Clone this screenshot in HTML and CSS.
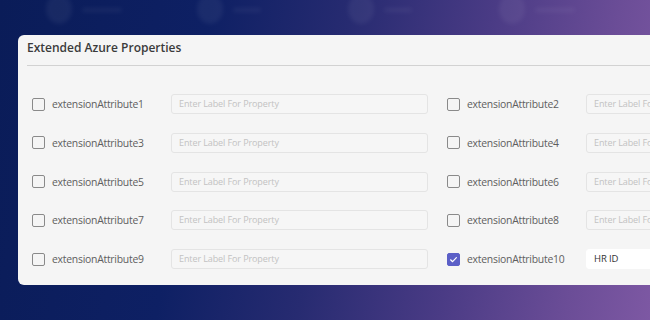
FILE: index.html
```html
<!DOCTYPE html>
<html>
<head>
<meta charset="utf-8">
<link rel="stylesheet" href="styles.css">
</head>
<body>
<div class="page">
  <div class="tiles">
    <div class="tile"><span class="blob"></span><span class="ghost"></span></div>
    <div class="tile"><span class="blob"></span><span class="ghost short"></span></div>
    <div class="tile"><span class="blob"></span><span class="ghost short"></span></div>
    <div class="tile"><span class="blob"></span><span class="ghost"></span></div>
  </div>
  <section class="card">
    <header class="card-head">
      <h2 class="title">Extended Azure Properties</h2>
    </header>
    <div class="grid">
      <div class="field"><span class="box"></span><span class="label">extensionAttribute1</span><div class="input ph">Enter Label For Property</div></div>
      <div class="field"><span class="box"></span><span class="label">extensionAttribute2</span><div class="input ph">Enter Label For Property</div></div>
      <div class="field"><span class="box"></span><span class="label">extensionAttribute3</span><div class="input ph">Enter Label For Property</div></div>
      <div class="field"><span class="box"></span><span class="label">extensionAttribute4</span><div class="input ph">Enter Label For Property</div></div>
      <div class="field"><span class="box"></span><span class="label">extensionAttribute5</span><div class="input ph">Enter Label For Property</div></div>
      <div class="field"><span class="box"></span><span class="label">extensionAttribute6</span><div class="input ph">Enter Label For Property</div></div>
      <div class="field"><span class="box"></span><span class="label">extensionAttribute7</span><div class="input ph">Enter Label For Property</div></div>
      <div class="field"><span class="box"></span><span class="label">extensionAttribute8</span><div class="input ph">Enter Label For Property</div></div>
      <div class="field"><span class="box"></span><span class="label">extensionAttribute9</span><div class="input ph">Enter Label For Property</div></div>
      <div class="field"><span class="box checked"><svg viewBox="0 0 13 13" width="13" height="13"><path d="M3.6 6.8 L5.6 8.7 L9.4 4.6" fill="none" stroke="#fff" stroke-width="1.2" stroke-linecap="round" stroke-linejoin="round"/></svg></span><span class="label">extensionAttribute10</span><div class="input filled">HR ID</div></div>
    </div>
  </section>
</div>
</body>
</html>
```

FILE: styles.css
```css
html, body {
  margin: 0;
  padding: 0;
}
body {
  width: 650px;
  height: 320px;
  overflow: hidden;
  background: linear-gradient(100deg, #0a1c58 0%, #0e2064 30%, #272b71 50%, #4a3b85 70%, #6b4d97 88%, #7d58a3 100%);
  font-family: "Open Sans", "Noto Sans", sans-serif;
}
.page {
  display: flex;
  flex-direction: column;
  padding-left: 18px;
}
.tiles {
  height: 35px;
  display: flex;
  padding-left: 28px;
  opacity: 0.05;
  filter: blur(2px);
}
.tile {
  width: 166px;
  display: flex;
  align-items: flex-start;
  gap: 10px;
}
.blob {
  width: 26px;
  height: 30px;
  border-radius: 50%;
  background: #ffffff;
  margin-top: -6px;
}
.ghost {
  width: 40px;
  height: 4px;
  margin-top: 8px;
  background: #ffffff;
  border-radius: 2px;
}
.ghost.short { width: 28px; }
.card {
  width: 700px;
  height: 250px;
  background: #f5f5f5;
  border-radius: 6px;
  box-sizing: border-box;
}
.card-head {
  margin-left: 9px;
  padding-top: 4px;
  height: 26px;
  border-bottom: 1px solid #d2d2d2;
}
.title {
  margin: 0;
  font-size: 12px;
  line-height: 18px;
  font-weight: 600;
  color: #3b3b3b;
}
.grid {
  display: grid;
  grid-template-columns: 396px 396px;
  column-gap: 19px;
  row-gap: 18.75px;
  padding: 28px 0 0 14px;
}
.field {
  display: flex;
  align-items: center;
  height: 20px;
}
.box {
  width: 13px;
  height: 13px;
  box-sizing: border-box;
  border: 1px solid #8a8a8a;
  border-radius: 2px;
  flex: none;
  margin-right: 7px;
  display: flex;
}
.box.checked {
  background: #5b5fc7;
  border-color: #5b5fc7;
}
.box svg { margin: -1px; }
.label {
  width: 119px;
  flex: none;
  font-size: 10.4px;
  letter-spacing: -0.25px;
  color: #5e5e5e;
  white-space: nowrap;
}
.input {
  width: 257px;
  height: 20px;
  box-sizing: border-box;
  border: 1px solid #e4e4e4;
  border-radius: 3px;
  background: #f6f6f6;
  padding-left: 7px;
  font-size: 9px;
  letter-spacing: -0.1px;
  line-height: 18px;
  white-space: nowrap;
  overflow: hidden;
}
.ph { color: #c2c2c2; }
.filled {
  background: #ffffff;
  border-color: #ffffff;
  color: #333333;
  font-size: 9.5px;
}
```
